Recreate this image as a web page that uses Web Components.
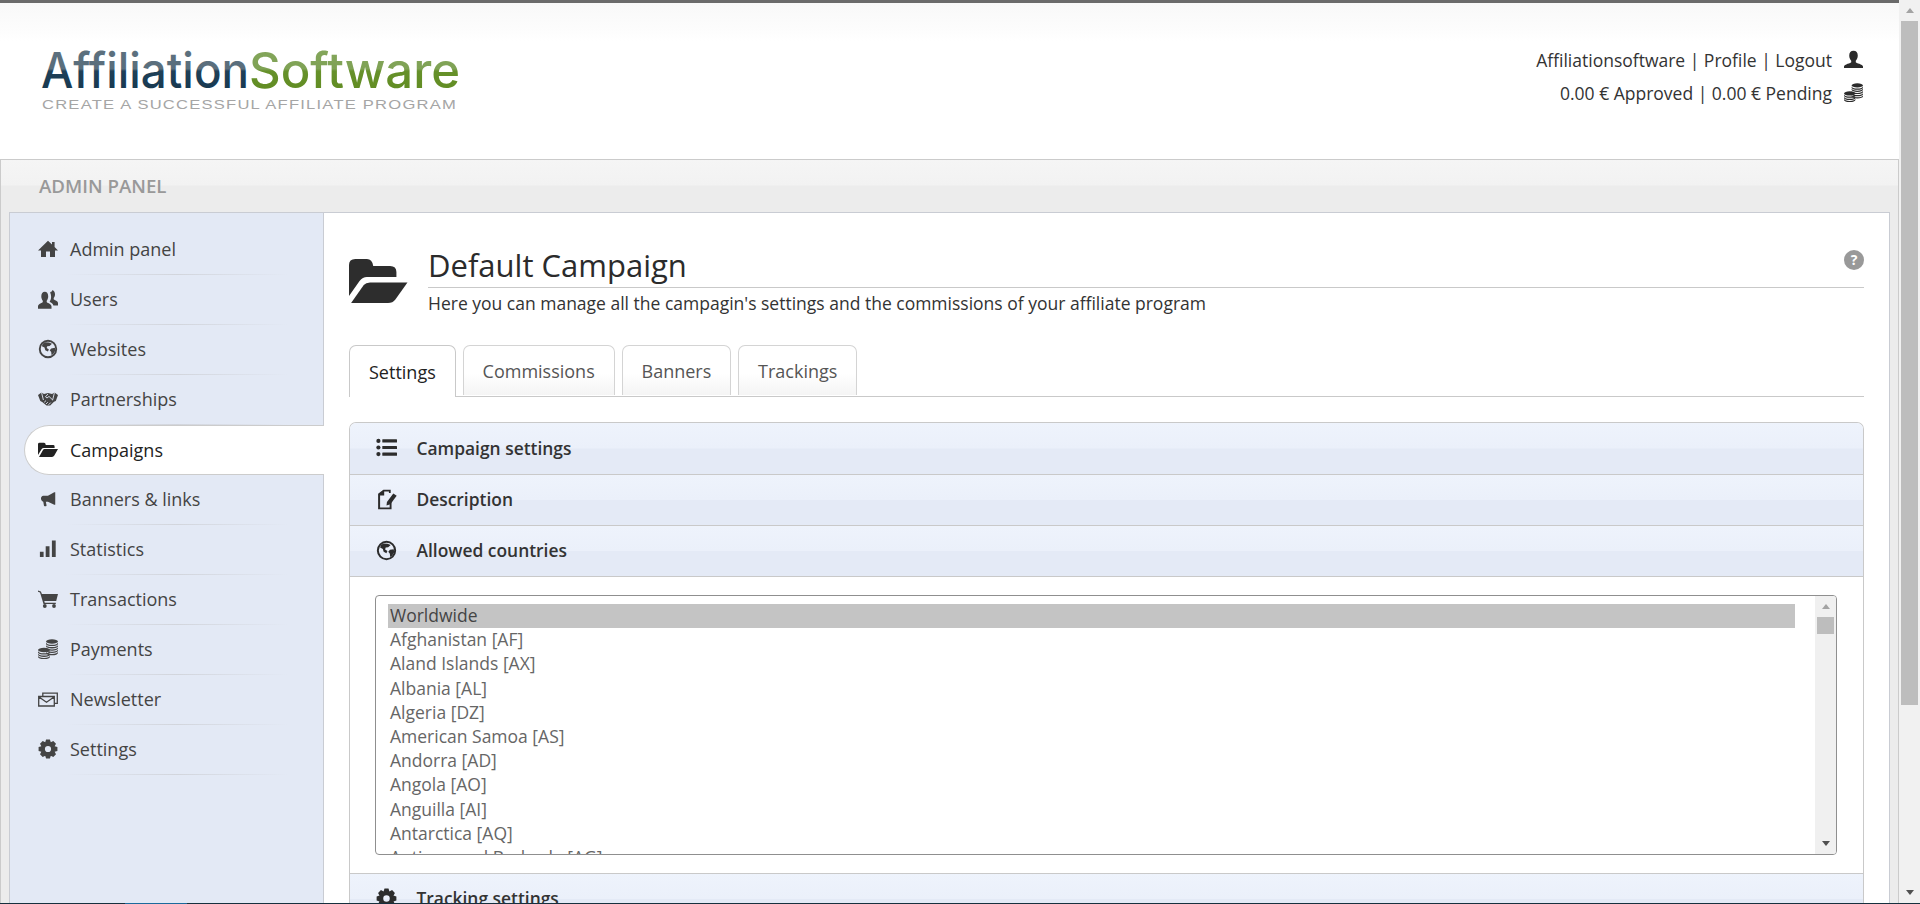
<!DOCTYPE html>
<html lang="en">
<head>
<meta charset="utf-8">
<title>Default Campaign</title>
<style>
html,body{margin:0;padding:0;height:904px;overflow:hidden;background:#fff}
body{font-family:"Open Sans","Liberation Sans",sans-serif;color:#333}
</style>
</head>
<body>
<app-shell>
  <app-header slot="header"></app-header>
  <admin-panel slot="panel" heading="ADMIN PANEL">
    <side-nav slot="nav">
      <nav-item icon="home">Admin panel</nav-item>
      <nav-item icon="users">Users</nav-item>
      <nav-item icon="globe">Websites</nav-item>
      <nav-item icon="handshake">Partnerships</nav-item>
      <nav-item icon="folder" active>Campaigns</nav-item>
      <nav-item icon="bullhorn">Banners &amp; links</nav-item>
      <nav-item icon="signal">Statistics</nav-item>
      <nav-item icon="cart">Transactions</nav-item>
      <nav-item icon="coins">Payments</nav-item>
      <nav-item icon="envelope">Newsletter</nav-item>
      <nav-item icon="cog">Settings</nav-item>
    </side-nav>
    <page-title heading="Default Campaign">Here you can manage all the campagin's settings and the commissions of your affiliate program</page-title>
    <tab-bar>
      <tab-item active>Settings</tab-item>
      <tab-item>Commissions</tab-item>
      <tab-item>Banners</tab-item>
      <tab-item>Trackings</tab-item>
    </tab-bar>
    <accordion-box>
      <accordion-row icon="list" first>Campaign settings</accordion-row>
      <accordion-row icon="edit">Description</accordion-row>
      <accordion-row icon="globe">Allowed countries</accordion-row>
      <country-list></country-list>
      <accordion-row icon="cog">Tracking settings</accordion-row>
    </accordion-box>
  </admin-panel>
</app-shell>

<script>
function band(cx,y,rx,ry,h){return `M${cx-rx} ${y}a${rx} ${ry} 0 0 0 ${2*rx} 0v${h}a${rx} ${ry} 0 0 1 ${-2*rx} 0z`;}
function stack(cx,topY,rx,ry,n){
  let d=`M${cx-rx} ${topY}a${rx} ${ry} 0 0 1 ${2*rx} 0a${rx} ${ry} 0 0 1 ${-2*rx} 0z`;
  for(let i=0;i<n;i++){d+=band(cx,topY+1.1+i*2.3,rx,ry,1.3);}
  return d;
}
function gear(){
  const c=10,n=8,ro=9.6,ri=7.2;let d='';
  for(let i=0;i<n;i++){
    const a=i/n*2*Math.PI-Math.PI/2,w=.2,g=.2;
    const pts=[[ri,a-w-g],[ro,a-w],[ro,a+w],[ri,a+w+g]];
    pts.forEach((p,j)=>{d+=(i===0&&j===0?'M':'L')+(c+p[0]*Math.cos(p[1])).toFixed(2)+' '+(c+p[0]*Math.sin(p[1])).toFixed(2);});
  }
  d+='ZM10 6.9a3.1 3.1 0 1 0 0 6.2a3.1 3.1 0 1 0 0-6.2Z';
  return d;
}
const ICONS={
  home:`<path d="M10 1.800L14 5.500V3H16.600V8L20 11.400H17V18H12V12.600H8V18H3V11.400H0Z"/>`,
  users:`<g transform="translate(0 -2.400) scale(1 1.200)"><path d="M6.800 4.200c2.200 0 3.400 1.700 3.400 3.800 0 1.600-.7 3-1.500 3.700v1.100c0 .6 4.800 1.500 4.800 3.600v2H0v-2c0-2.100 4.800-3 4.800-3.600v-1.100C4 11 3.300 9.600 3.300 8c0-2.100 1.300-3.800 3.500-3.800z"/><path d="M14 3c1.900 0 3 1.500 3 3.300 0 1.400-.6 2.500-1.300 3.200v1c0 .5 4.300 1.300 4.300 3.200v2h-4.600c-.4-1.500-2.200-2.300-3.600-2.900v-.5c.7-.8 1.300-2.200 1.300-3.800 0-1.300-.3-2.500-1-3.400.4-.7 1-1.100 1.900-1.100z"/></g>`,
  globe:`<path fill-rule="evenodd" d="M10 .8a9.200 9.200 0 1 0 0 18.400a9.200 9.200 0 1 0 0-18.400ZM10 2.700a7.300 7.300 0 1 1 0 14.600a7.300 7.300 0 1 1 0-14.600Z"/><path d="M7 3.300l4 .2 3 1.300-2.400 2.200-2.400.2-.5 1.800 2.200 1.400-1 2.200-2.600-1.400-.8-2.700-2.600-1.300.8-2.400zM13.300 9.400l3.600-.6.500 2.800-2.300 3.600-1.600.9-.3-3.100-1.500-1.800z"/>`,
  handshake:`<path d="M0 6L3.500 3.400 6 5 10 4 14 5 16.500 3.400 20 6 17.800 12 16 12.700 12.200 16.600 8.500 16.600 4.200 13 2.300 12Z"/><path fill="none" stroke="#e3e9f5" stroke-width=".9" d="M3.500 3.400L5.400 11M16.500 3.400L14.700 10.800M10 5L7.500 7.800 9 9 11 7.400 15 11.300M8 15L9.800 13.200M10.500 15.800L12.700 13.600M6.200 13.300L8 11.600"/>`,
  folder:`<path d="M0 4.200Q0 2.800 1.500 2.800H6Q7.500 2.800 7.800 5H15.200Q16.600 5 16.600 6.400V8H5.700Q4.400 8 3.700 9.100L0 14.900Z"/><path d="M1 16.900 L5 10Q5.500 9.100 6.500 9.100H20L16.300 15.500Q15.500 16.900 14 16.900Z"/>`,
  bullhorn:`<path transform="translate(1.500 2) scale(.82)" d="M18 1.500h1.200v15.200H18L10.300 13H7.700l.9 4.500q.1 1-1 1.100H6.300q-.8 0-.9-1l-.8-4.600C3 12.700 1.800 11 1.800 9.200s1-3.300 2.800-3.500h5.700z"/>`,
  signal:`<path d="M1.900 12.800h3.700V18H1.900zM7.700 7.300h3.800V18H7.700zM13.900 1.400h3.800V18h-3.800z"/>`,
  cart:`<path d="M0 1.600 L2.900 2.600 L3.900 5 H20 L18.200 12 H6.300 L6.800 13.800 H17.800 V15.100 H5.500 L2 3.600 L0 2.800Z"/><circle cx="6.800" cy="17" r="1.900"/><circle cx="16" cy="17" r="1.900"/>`,
  coins:`<path d="${stack(14,2.500,6,2.200,5)}"/><path d="${stack(6,11,6,2.200,3)}"/>`,
  envelope:`<path fill="none" stroke="currentColor" stroke-width="1.300" d="M.7 7.500H16.300V17H.7ZM1 8L8.500 13.200 16 8M4.800 7V4.200H19.300V14.300H16.500"/>`,
  cog:`<path fill-rule="evenodd" d="${gear()}"/>`,
  list:`<circle cx="2.300" cy="3.700" r="2"/><circle cx="2.300" cy="10" r="2"/><circle cx="2.300" cy="16.300" r="2"/><rect x="6" y="2.200" width="14" height="3" rx=".5"/><rect x="6" y="8.500" width="14" height="3" rx=".5"/><rect x="6" y="14.800" width="14" height="3" rx=".5"/>`,
  edit:`<path d="M2 4.500 L7 .8 H14 V3.800 H12.300 V2.400 H7.800 V6.200 H3.900 V17.600 H13 V13.800 L14.800 12 V19.300 H2Z"/><path d="M10.400 12.300 L16.500 4.200 L19.700 6.500 L13.700 14.600 L10 15.800Z"/>`,
  user:`<path d="M10 .8c2.900 0 4.500 2 4.500 5 0 2.400-1 4.500-2.100 5.400v1.600c0 1 7.600 2 7.600 4.500V19H0v-1.700c0-2.500 7.600-3.500 7.600-4.500v-1.600C6.500 10.300 5.500 8.200 5.500 5.800c0-3 1.600-5 4.500-5z"/>`
};
function def(name,html,init){
  const t=document.createElement('template');t.innerHTML=html;
  customElements.define(name,class extends HTMLElement{
    constructor(){super();this.attachShadow({mode:'open'}).appendChild(t.content.cloneNode(true));}
    connectedCallback(){if(init)init(this,this.shadowRoot);}
  });
}

def('as-icon',`<style>:host{display:inline-block;width:var(--s,20px);height:var(--s,20px);line-height:0;flex:none}svg{width:100%;height:100%;fill:currentColor;display:block}</style><svg viewBox="0 0 20 20" aria-hidden="true"></svg>`,
  (h,s)=>{s.querySelector('svg').innerHTML=ICONS[h.getAttribute('name')]||'';});

function mountIcon(h,s){
  s.querySelector('.ic').innerHTML=`<as-icon name="${h.getAttribute('icon')}"></as-icon>`;
}

def('app-shell',`<style>
:host{display:flex;flex-direction:column;height:904px;overflow:hidden}
.row{display:flex;flex:1;min-height:0}
.page{width:1899px;flex:none;display:flex;flex-direction:column;min-height:0;overflow:hidden}
.top{height:3px;background:#6a6a6a;flex:none}
.task{height:1px;flex:none;background:linear-gradient(90deg,#16303e 0,#16303e 125px,#1c6a9c 125px,#1c6a9c 187px,#16303e 187px)}
</style>
<div class="row"><div class="page"><div class="top"></div><slot name="header"></slot><slot name="panel"></slot></div><page-scroll></page-scroll></div><div class="task"></div>`);

def('page-scroll',`<style>
:host{display:flex;flex-direction:column;align-items:center;width:21px;flex:none;background:#f1f1f1;box-sizing:border-box}
.a{height:21px;flex:none;display:flex;align-items:center;justify-content:center;width:100%}
.up{width:0;height:0;border-left:4.500px solid transparent;border-right:4.500px solid transparent;border-bottom:5px solid #a3a3a3}
.dn{width:0;height:0;border-left:4.500px solid transparent;border-right:4.500px solid transparent;border-top:5px solid #505050}
.th{width:17px;height:684px;background:#bdbdbd;flex:none}
.sp{flex:1}
</style><div class="a"><div class="up"></div></div><div class="th"></div><div class="sp"></div><div class="a"><div class="dn"></div></div>`);

def('brand-logo',`<style>:host{display:block;width:430px;height:70px}svg{display:block;overflow:visible}</style>
<svg width="430" height="70" viewBox="0 0 430 70">
<defs>
<linearGradient id="d" x1="0" y1="0" x2="0" y2="1"><stop offset="0" stop-color="#5d717f"/><stop offset=".48" stop-color="#5a6e7c"/><stop offset=".52" stop-color="#1f4058"/><stop offset="1" stop-color="#14354c"/></linearGradient>
<linearGradient id="g" x1="0" y1="0" x2="0" y2="1"><stop offset="0" stop-color="#86a85e"/><stop offset=".48" stop-color="#7fa255"/><stop offset=".52" stop-color="#66912a"/><stop offset="1" stop-color="#5f8a1f"/></linearGradient>
</defs>
<text x="0" y="35.500" font-family="Inter,'Liberation Sans',sans-serif" font-size="49" font-weight="500" fill="url(#d)" textLength="208" lengthAdjust="spacingAndGlyphs">Affiliation</text>
<text x="208" y="35.500" font-family="Inter,'Liberation Sans',sans-serif" font-size="49" font-weight="500" fill="url(#g)" textLength="211" lengthAdjust="spacingAndGlyphs">Software</text>
<text x="1" y="56.500" font-family="'Liberation Sans',sans-serif" font-size="13.500" fill="#a5a5a5" textLength="415" lengthAdjust="spacingAndGlyphs" style="letter-spacing:1px">CREATE A SUCCESSFUL AFFILIATE PROGRAM</text>
</svg>`);

def('app-header',`<style>
:host{display:flex;justify-content:space-between;height:156px;flex:none;box-sizing:border-box;padding:49px 36px 0 41px;background:linear-gradient(#f8f8f8 0,#fdfdfd 30px,#fff 38px);color:#333;font-size:17.500px}
.r{display:flex;flex-direction:column;align-items:flex-end;margin-top:-9px}
.l{display:flex;align-items:center;height:33px;white-space:nowrap}
as-icon{margin-left:12px;color:#2b2b2b;--s:19px}
</style><brand-logo></brand-logo>
<div class="r">
<div class="l"><span>Affiliationsoftware | Profile | Logout</span><as-icon name="user"></as-icon></div>
<div class="l"><span>0.00 € Approved | 0.00 € Pending</span><as-icon name="coins"></as-icon></div>
</div>`);

def('admin-panel',`<style>
:host{display:flex;flex-direction:column;flex:1;min-height:0;box-sizing:border-box;border:1px solid #cbcbcb;border-bottom:0;background:#ececec}
.head{height:52px;flex:none;box-sizing:border-box;padding:0 0 2px 38px;display:flex;align-items:center;font-size:18.700px;font-weight:600;color:#999;background:linear-gradient(#f5f5f5 0,#f2f2f2 25px,#ececec 26px,#ececec 100%)}
.body{flex:1;min-height:0;display:flex;margin:0 8px;border:1px solid #c9ccd3;border-bottom:0;background:#fff;overflow:hidden}
.main{flex:1;min-width:0;padding:0 25px 0 25px;box-sizing:border-box;overflow:hidden}
</style><div class="head"></div><div class="body"><slot name="nav"></slot><div class="main"><slot></slot></div></div>`,
(h,s)=>{s.querySelector('.head').textContent=h.getAttribute('heading');});

def('side-nav',`<style>
:host{display:block;width:314px;flex:none;box-sizing:border-box;padding:12px 0 0 0;background:#e3e9f5;box-shadow:inset -1px 0 0 #c9ccd3}
</style><slot></slot>`);

def('nav-item',`<style>
:host{display:flex;align-items:center;height:50px;box-sizing:border-box;padding:0 0 2px 14px;margin-left:14px;position:relative;font-size:18px;color:#444;gap:12px;white-space:nowrap}
:host([active]){background:#fff;border:1px solid #ccc;border-right:0;border-radius:25px 0 0 25px;color:#222;padding:0 0 1px 13px}
.ic{width:20px;height:20px;flex:none;color:#444}
:host([active]) .ic{color:#222}
.d{position:absolute;left:42px;right:36px;bottom:0;height:1px;background:linear-gradient(90deg,transparent,#d2d5dc 50%,transparent)}
:host([active]) .d{display:none}
</style><div class="ic"></div><span><slot></slot></span><div class="d"></div>`,mountIcon);

def('page-title',`<style>
:host{display:flex;height:132px;box-sizing:border-box;padding-top:31px;flex:none}
.f{width:59px;height:46px;margin:15px 20px 0 0;flex:none;color:#2d2d2d}
svg{display:block;fill:currentColor}
.t{flex:1;min-width:0;position:relative}
h1{margin:0;font-size:31px;font-weight:400;line-height:43px;color:#2b2b2b;border-bottom:1px solid #c9c9c9;height:43px;white-space:nowrap}
p{margin:3px 0 0;font-size:17.500px;line-height:24px;color:#333;white-space:nowrap}
.q{position:absolute;right:0;top:6px;width:20px;height:20px;border-radius:50%;background:#999;color:#fff;font:700 14px/20px "Open Sans",sans-serif;text-align:center}
</style><div class="f"><svg width="59" height="44" viewBox="0 0 56 44" preserveAspectRatio="none"><path d="M0 6Q0 0 6 0H17Q22 0 23 7H39Q45 7 45 13V18H17Q13 18 10 22L0 37Z"/><path d="M2 44L14 26Q16 23.500 20 23.500H55.500L44 40.500Q41.500 44 37 44Z"/></svg></div>
<div class="t"><h1></h1><p><slot></slot></p><div class="q">?</div></div>`,
(h,s)=>{s.querySelector('h1').textContent=h.getAttribute('heading');});

def('tab-bar',`<style>:host{display:flex;gap:6.800px;height:52px;box-sizing:border-box;border-bottom:1px solid #c9c9c9;align-items:flex-start;margin-bottom:25px}</style><slot></slot>`);

def('tab-item',`<style>
:host{display:flex;align-items:center;box-sizing:border-box;height:50px;padding:0 19px;font-size:18px;color:#555;background:linear-gradient(#fff 55%,#f4f4f4);border:1px solid #d4d4d4;border-bottom:0;border-radius:7px 7px 0 0;white-space:nowrap}
:host([active]){height:52px;background:#fff;color:#222;border-color:#c9c9c9;position:relative;padding:0 19px}
</style><slot></slot>`);

def('accordion-box',`<style>:host{display:block;border:1px solid #c9c9c9;border-bottom:0;border-radius:7px 7px 0 0;overflow:hidden;box-sizing:border-box}</style><slot></slot>`);

def('accordion-row',`<style>
:host{display:flex;align-items:center;height:51px;box-sizing:border-box;border-bottom:1px solid #c9c9c9;padding:0 0 2px 26px;gap:19.500px;font-size:17.400px;font-weight:600;color:#333;white-space:nowrap;background:linear-gradient(#eef3fc 0,#ebf0fa 49%,#e4eaf6 51%,#e4eaf6 100%)}
:host([first]){height:52px}
.ic{width:21px;height:21px;flex:none;color:#2c2c2c;--s:21px}
</style><div class="ic"></div><span><slot></slot></span>`,mountIcon);

const COUNTRIES=['Worldwide','Afghanistan [AF]','Aland Islands [AX]','Albania [AL]','Algeria [DZ]','American Samoa [AS]','Andorra [AD]','Angola [AO]','Anguilla [AI]','Antarctica [AQ]','Antigua and Barbuda [AG]'];
def('country-list',`<style>
:host{display:block;box-sizing:border-box;height:297px;padding:18px 26px 0 25px;border-bottom:1px solid #c9c9c9;background:#fff}
.box{display:flex;height:260px;box-sizing:border-box;border:1px solid #8f8f8f;border-radius:4px;overflow:hidden;background:#fff}
.opts{flex:1;min-width:0;padding:8px 20px 0 12px;overflow:hidden;font-size:17.500px;color:#666}
.o{height:24.200px;line-height:22.500px;padding-left:2px;white-space:nowrap}
.o.s{background:#c4c4c4;color:#444}
.bar{width:21px;flex:none;background:#f0f0f0;display:flex;flex-direction:column;align-items:center}
.a{height:21px;flex:none;display:flex;align-items:center;justify-content:center;width:100%}
.up{width:0;height:0;border-left:4.500px solid transparent;border-right:4.500px solid transparent;border-bottom:5px solid #a3a3a3}
.dn{width:0;height:0;border-left:4.500px solid transparent;border-right:4.500px solid transparent;border-top:5px solid #505050}
.th{width:17px;height:17px;background:#bdbdbd;flex:none}
.sp{flex:1}
</style><div class="box"><div class="opts"></div><div class="bar"><div class="a"><div class="up"></div></div><div class="th"></div><div class="sp"></div><div class="a"><div class="dn"></div></div></div></div>`,
(h,s)=>{const o=s.querySelector('.opts');COUNTRIES.forEach((c,i)=>{const d=document.createElement('div');d.className='o'+(i?'':' s');d.textContent=c;o.appendChild(d);});});
</script>
</body>
</html>
